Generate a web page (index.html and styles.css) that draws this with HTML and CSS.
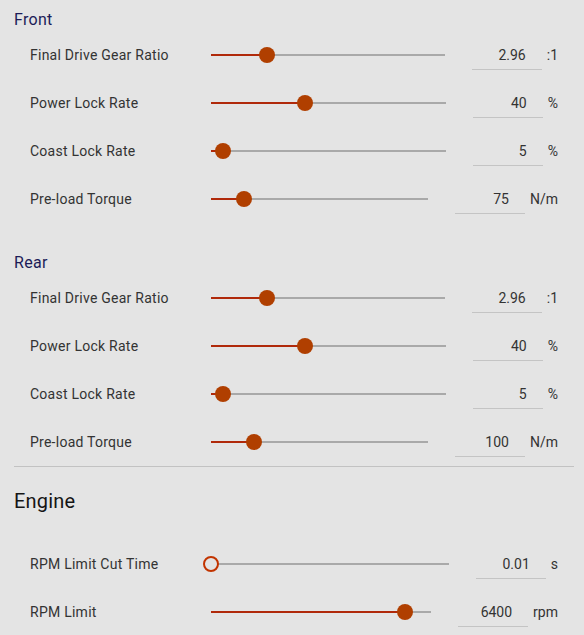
FILE: index.html
```html
<!DOCTYPE html>
<html lang="en">
    <head>
        <meta charset="UTF-8" />
        <meta name="viewport" content="width=device-width, initial-scale=1.0" />
        <title>Differential settings</title>
        <link rel="stylesheet" href="styles.css">
    </head>
    <body>
        <div class="panel">
            <h3 class="sub-title">Front</h3>
            <div class="row">
                <span class="label">Final Drive Gear Ratio</span>
                <div class="slider"><div class="track"></div><div class="fill" style="width: 24%"></div><div class="thumb" style="left: 24%"></div></div>
                <input class="value" type="text" value="2.96" />
                <span class="unit">:1</span>
            </div>
            <div class="row">
                <span class="label">Power Lock Rate</span>
                <div class="slider"><div class="track"></div><div class="fill" style="width: 40%"></div><div class="thumb" style="left: 40%"></div></div>
                <input class="value" type="text" value="40" />
                <span class="unit">%</span>
            </div>
            <div class="row">
                <span class="label">Coast Lock Rate</span>
                <div class="slider"><div class="track"></div><div class="fill" style="width: 5%"></div><div class="thumb" style="left: 5%"></div></div>
                <input class="value" type="text" value="5" />
                <span class="unit">%</span>
            </div>
            <div class="row">
                <span class="label">Pre-load Torque</span>
                <div class="slider"><div class="track"></div><div class="fill" style="width: 15%"></div><div class="thumb" style="left: 15%"></div></div>
                <input class="value" type="text" value="75" />
                <span class="unit">N/m</span>
            </div>

            <h3 class="sub-title rear">Rear</h3>
            <div class="row">
                <span class="label">Final Drive Gear Ratio</span>
                <div class="slider"><div class="track"></div><div class="fill" style="width: 24%"></div><div class="thumb" style="left: 24%"></div></div>
                <input class="value" type="text" value="2.96" />
                <span class="unit">:1</span>
            </div>
            <div class="row">
                <span class="label">Power Lock Rate</span>
                <div class="slider"><div class="track"></div><div class="fill" style="width: 40%"></div><div class="thumb" style="left: 40%"></div></div>
                <input class="value" type="text" value="40" />
                <span class="unit">%</span>
            </div>
            <div class="row">
                <span class="label">Coast Lock Rate</span>
                <div class="slider"><div class="track"></div><div class="fill" style="width: 5%"></div><div class="thumb" style="left: 5%"></div></div>
                <input class="value" type="text" value="5" />
                <span class="unit">%</span>
            </div>
            <div class="row">
                <span class="label">Pre-load Torque</span>
                <div class="slider"><div class="track"></div><div class="fill" style="width: 20%"></div><div class="thumb" style="left: 20%"></div></div>
                <input class="value" type="text" value="100" />
                <span class="unit">N/m</span>
            </div>

            <hr class="divider" />

            <h2 class="title">Engine</h2>
            <div class="row">
                <span class="label">RPM Limit Cut Time</span>
                <div class="slider"><div class="track"></div><div class="thumb empty" style="left: 0%"></div></div>
                <input class="value" type="text" value="0.01" />
                <span class="unit">s</span>
            </div>
            <div class="row">
                <span class="label">RPM Limit</span>
                <div class="slider"><div class="track"></div><div class="fill" style="width: 88%"></div><div class="thumb" style="left: 88%"></div></div>
                <input class="value" type="text" value="6400" />
                <span class="unit">rpm</span>
            </div>
        </div>
    </body>
</html>
```

FILE: styles.css
```css
html,
body {
    margin: 0;
    background-color: #e4e4e4;
    font-family: Roboto, "Liberation Sans", sans-serif;
    color: #333;
}
.panel {
    padding: 7px 10px 0 14px;
}
.sub-title {
    margin: 0 0 -1px;
    padding-top: 1px;
    font-size: 16px;
    font-weight: normal;
    line-height: 24px;
    letter-spacing: 0.3px;
    color: #1c1c58;
}
.sub-title.rear {
    margin-top: 27px;
}
.title {
    margin: 20px 0 25px;
    font-size: 20px;
    font-weight: normal;
    line-height: 28px;
    letter-spacing: 0.2px;
    color: #151515;
}
.divider {
    margin: 0;
    border: 0;
    border-top: 1px solid #c2c2c2;
}

.row {
    display: flex;
    align-items: center;
    height: 48px;
    padding: 0 16px;
    font-size: 14px;
}
.label {
    width: 181px;
    flex: none;
    letter-spacing: 0.25px;
}
.slider {
    position: relative;
    flex: 1;
    height: 16px;
    margin-right: 27px;
}
.track,
.fill {
    position: absolute;
    left: 0;
    top: 7px;
    height: 2px;
}
.track {
    right: 0;
    background-color: #a9a9a9;
}
.fill {
    background-color: #b0290a;
}
.thumb {
    position: absolute;
    top: 0;
    width: 16px;
    height: 16px;
    margin-left: -8px;
    border-radius: 50%;
    background-color: #b03f00;
}
.thumb.empty {
    box-sizing: border-box;
    border: 2px solid #c23400;
    background-color: #e4e4e4;
}
.value {
    width: 70px;
    box-sizing: border-box;
    height: 29px;
    padding: 0 16px 0 0;
    border: 0;
    border-bottom: 1px solid #c4c4c4;
    background: transparent;
    font-family: inherit;
    font-size: 14px;
    color: #333;
    text-align: right;
}
.unit {
    margin-left: 5px;
}
```
